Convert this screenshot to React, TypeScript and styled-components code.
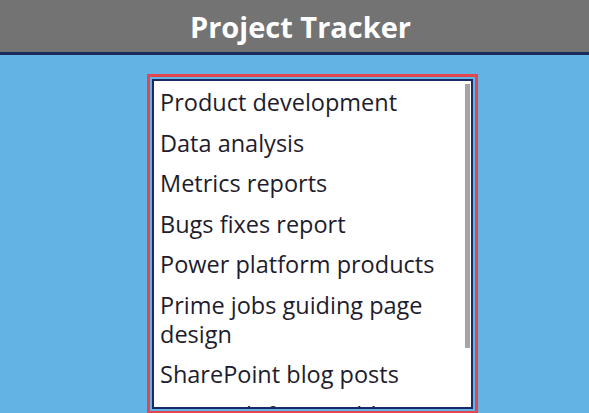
import styled, { createGlobalStyle } from 'styled-components'

const GlobalStyle = createGlobalStyle`
  html, body {
    margin: 0;
    padding: 0;
    background: #63b4e4;
    font-family: "Open Sans", "Noto Sans", sans-serif;
  }
`

const Page = styled.div`
  width: 589px;
  height: 413px;
  overflow: hidden;
  background: #63b4e4;
`

const Header = styled.header`
  height: 52px;
  background: #737373;
  border-bottom: 3px solid #1b2c5c;
  display: flex;
  align-items: center;
  justify-content: center;
  padding-left: 12px;
`

const Title = styled.h1`
  margin: 0;
  color: #ffffff;
  font-size: 29px;
  font-weight: 700;
`

const Frame = styled.div`
  margin: 19px 0 0 147px;
  width: 321px;
  height: 330px;
  border: 3px solid #e2474f;
  padding: 2px;
  background: #63b4e4;
`

const ListBox = styled.div`
  position: relative;
  box-sizing: border-box;
  height: 100%;
  background: #ffffff;
  border: 2px solid #1b2a66;
  overflow: hidden;
`

const List = styled.ul`
  margin: 0;
  padding: 1px 10px 0 0;
  list-style: none;
  height: 100%;
  overflow: hidden;
`

const Item = styled.li`
  padding: 6px 0 5.5px 6px;
  font-size: 23.5px;
  line-height: 29px;
  color: #1e1c2c;
`

const ScrollThumb = styled.div`
  position: absolute;
  top: 3px;
  right: 1px;
  width: 5px;
  height: 264px;
  background: #a5a5a5;
`

const items = [
  'Product development',
  'Data analysis',
  'Metrics reports',
  'Bugs fixes report',
  'Power platform products',
  'Prime jobs guiding page design',
  'SharePoint blog posts',
  'Research for new blog',
  'Team meeting notes',
]

export default function App() {
  return (
    <>
      <GlobalStyle />
      <Page>
        <Header>
          <Title>Project Tracker</Title>
        </Header>
        <Frame>
          <ListBox>
            <List>
              {items.map((item) => (
                <Item key={item}>{item}</Item>
              ))}
            </List>
            <ScrollThumb />
          </ListBox>
        </Frame>
      </Page>
    </>
  )
}
